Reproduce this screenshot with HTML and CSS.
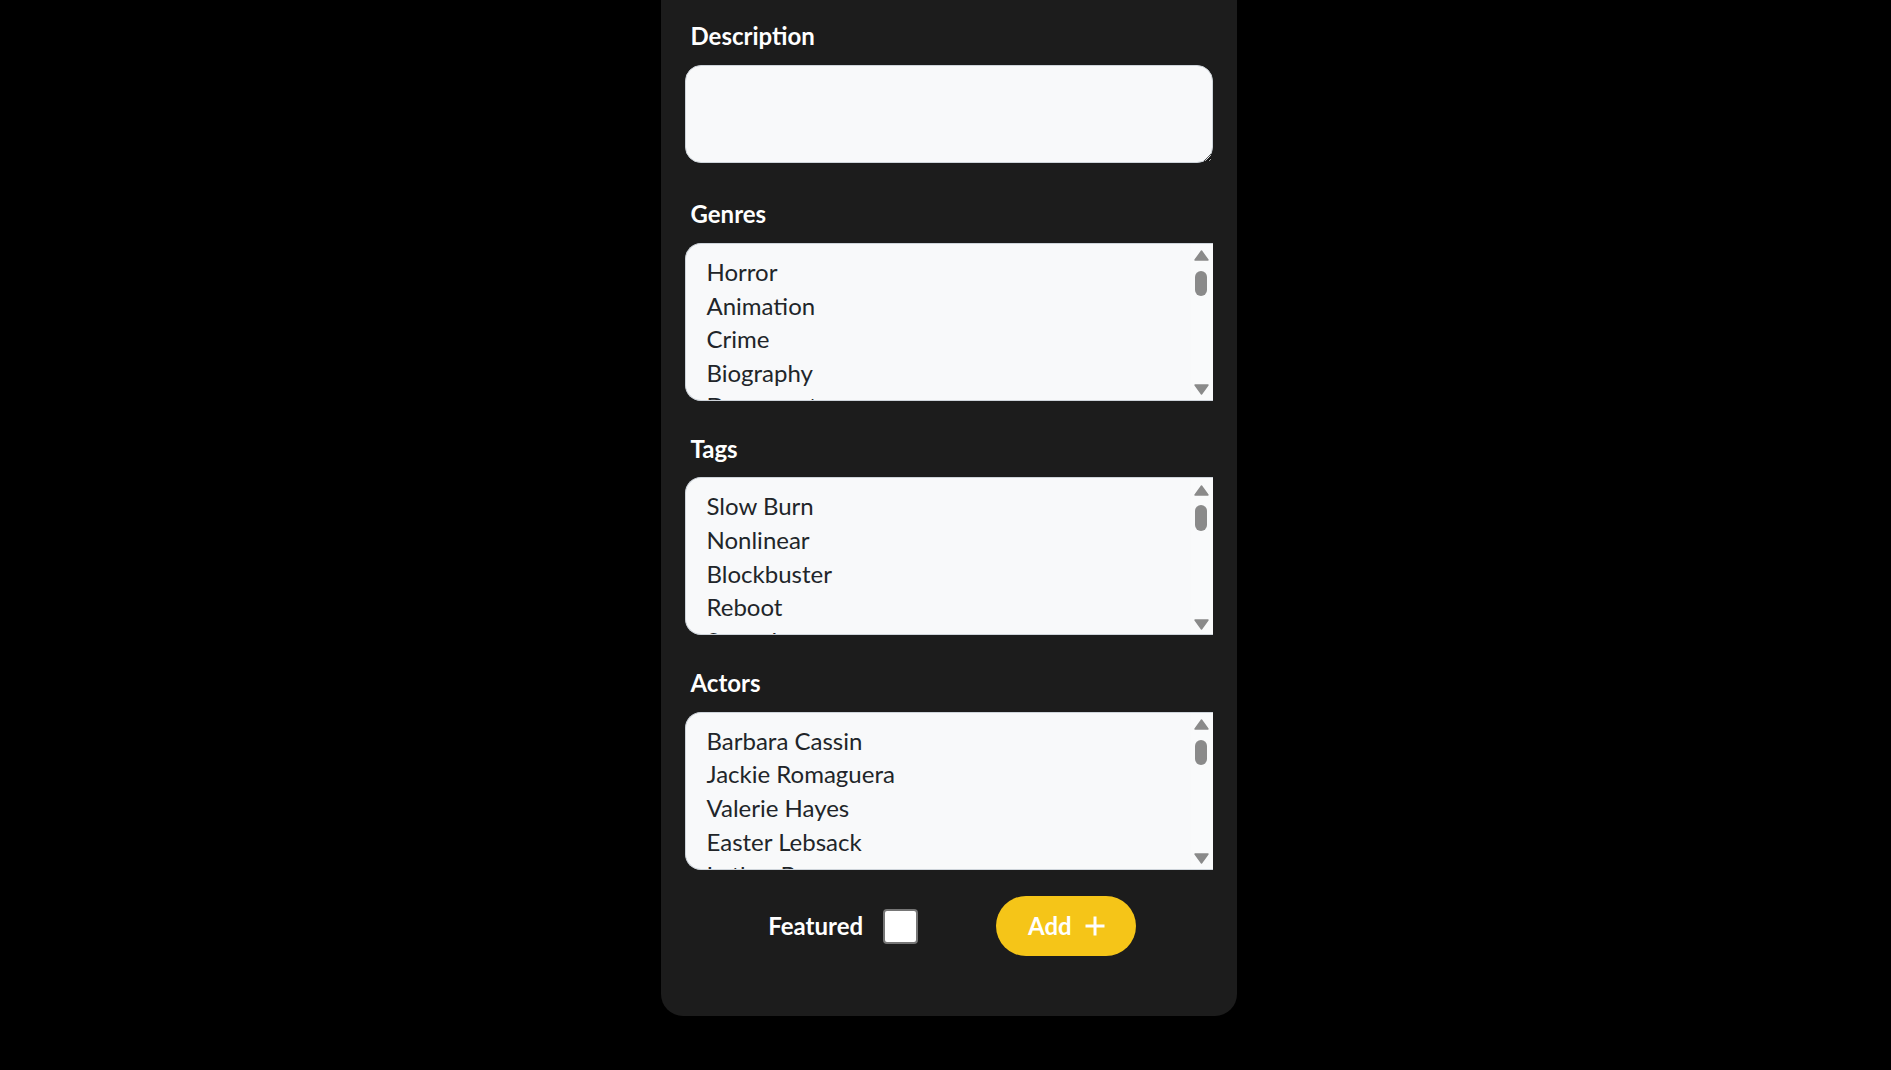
FILE: index.html
```html
<!DOCTYPE html>
<html lang="en">
<head>
<meta charset="utf-8">
<title>Add Movie</title>
<link rel="stylesheet" href="styles.css">
</head>
<body>
<form class="card">
  <div class="field field-text">
    <label class="label" for="desc">Description</label>
    <textarea id="desc" class="textarea"></textarea>
  </div>

  <div class="field">
    <div class="label">Genres</div>
    <div class="listbox">
      <div class="options">
        <div class="option">Horror</div>
        <div class="option">Animation</div>
        <div class="option">Crime</div>
        <div class="option">Biography</div>
        <div class="option">Documentary</div>
      </div>
      <div class="scrollbar">
        <svg class="arrow" viewBox="0 0 15 11" width="15" height="11"><polygon points="7.5,1 14,10 1,10"/></svg>
        <div class="thumb"></div>
        <div class="track"></div>
        <svg class="arrow" viewBox="0 0 15 11" width="15" height="11"><polygon points="1,1 14,1 7.5,10"/></svg>
      </div>
    </div>
  </div>

  <div class="field">
    <div class="label">Tags</div>
    <div class="listbox">
      <div class="options">
        <div class="option">Slow Burn</div>
        <div class="option">Nonlinear</div>
        <div class="option">Blockbuster</div>
        <div class="option">Reboot</div>
        <div class="option">Sequel</div>
      </div>
      <div class="scrollbar">
        <svg class="arrow" viewBox="0 0 15 11" width="15" height="11"><polygon points="7.5,1 14,10 1,10"/></svg>
        <div class="thumb"></div>
        <div class="track"></div>
        <svg class="arrow" viewBox="0 0 15 11" width="15" height="11"><polygon points="1,1 14,1 7.5,10"/></svg>
      </div>
    </div>
  </div>

  <div class="field field-last">
    <div class="label">Actors</div>
    <div class="listbox">
      <div class="options">
        <div class="option">Barbara Cassin</div>
        <div class="option">Jackie Romaguera</div>
        <div class="option">Valerie Hayes</div>
        <div class="option">Easter Lebsack</div>
        <div class="option">Luther Bergnaum</div>
      </div>
      <div class="scrollbar">
        <svg class="arrow" viewBox="0 0 15 11" width="15" height="11"><polygon points="7.5,1 14,10 1,10"/></svg>
        <div class="thumb"></div>
        <div class="track"></div>
        <svg class="arrow" viewBox="0 0 15 11" width="15" height="11"><polygon points="1,1 14,1 7.5,10"/></svg>
      </div>
    </div>
  </div>

  <div class="actions">
    <label class="featured">
      <span class="featured-text">Featured</span>
      <input type="checkbox" class="checkbox">
    </label>
    <button type="button" class="add-btn">
      <span>Add</span>
      <svg class="plus" viewBox="0 0 20 20" width="20" height="20"><path d="M10 0.5V19.5M0.5 10H19.5"/></svg>
    </button>
  </div>
</form>
</body>
</html>
```

FILE: styles.css
```css
* {
  box-sizing: border-box;
}

html, body {
  margin: 0;
  padding: 0;
}

body {
  background: #000;
  min-height: 100vh;
  display: flex;
  justify-content: center;
  align-items: flex-start;
  padding-left: 6px;
  font-family: Lato, "Open Sans", sans-serif;
}

.card {
  width: 576px;
  background: #1c1c1c;
  border-radius: 0 0 22px 22px;
  padding: 21.3px 24px 60px;
}

.label {
  display: block;
  padding: 1px 0 0 6px;
  font-weight: 700;
  font-size: 24px;
  line-height: 28.8px;
  color: #fff;
  margin-bottom: 14px;
}

.field {
  margin-bottom: 32.6px;
}

.field-text {
  margin-bottom: 36.5px;
}

.field-last {
  margin-bottom: 26.7px;
}

.textarea {
  display: block;
  width: 100%;
  height: 97.6px;
  margin: 0;
  background: #f8f9fa;
  border: 1px solid #ced4da;
  border-radius: 16px;
  resize: vertical;
  font-family: Lato, sans-serif;
  font-size: 24px;
  outline: none;
}

.listbox {
  display: flex;
  height: 158px;
  background: #f8f9fa;
  border: 1px solid #ced4da;
  border-right: none;
  border-radius: 16px 0 0 16px;
  overflow: hidden;
}

.options {
  flex: 1;
  padding: 11px 0 0 21px;
  font-size: 24px;
  line-height: 33.6px;
  color: #212529;
  overflow: hidden;
}

.option {
  white-space: nowrap;
}

.scrollbar {
  flex: none;
  width: 22px;
  display: flex;
  flex-direction: column;
  align-items: center;
  padding: 6.4px 1px 4.6px 0;
  background: #f9fafb;
}

.arrow {
  display: block;
  flex: none;
}

.arrow polygon {
  fill: #8a8a8a;
  stroke: #8a8a8a;
  stroke-width: 1.4;
  stroke-linejoin: round;
}

.thumb {
  flex: none;
  width: 12.7px;
  height: 25.3px;
  margin-top: 9.7px;
  border-radius: 6.4px;
  background: #8a8a8a;
}

.track {
  flex: 1;
}

.actions {
  display: flex;
  align-items: center;
  justify-content: center;
  gap: 78px;
  padding-left: 7px;
}

.featured {
  display: flex;
  align-items: center;
  gap: 20px;
  font-weight: 700;
  font-size: 24px;
  line-height: 28.8px;
  color: #fff;
}

.checkbox {
  appearance: none;
  -webkit-appearance: none;
  margin: 0;
  width: 35px;
  height: 35px;
  background: #fff;
  border: 2px solid #767676;
  border-radius: 4px;
}

.add-btn {
  display: inline-flex;
  align-items: center;
  gap: 13px;
  height: 60px;
  padding: 0 31px 0 32px;
  border: none;
  border-radius: 30px;
  background: #f5c518;
  color: #fff;
  font-family: Lato, sans-serif;
  font-weight: 700;
  font-size: 24px;
  line-height: 28.8px;
  cursor: pointer;
}

.plus {
  display: block;
}

.plus path {
  stroke: #fff;
  stroke-width: 3;
  fill: none;
}
```
